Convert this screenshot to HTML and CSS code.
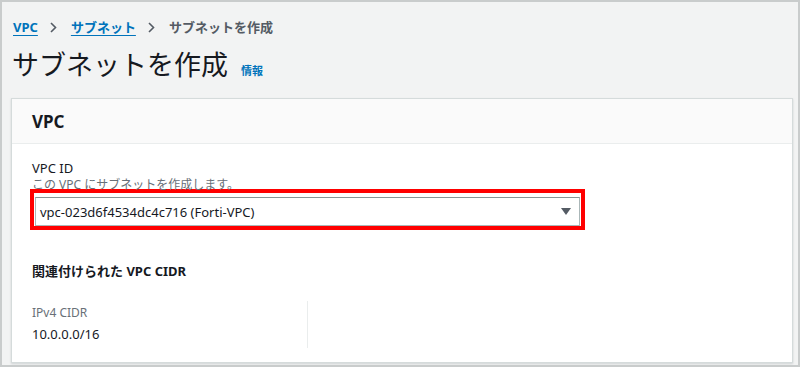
FILE: index.html
```html
<!DOCTYPE html>
<html lang="ja">
<head>
    <meta charset="UTF-8">
    <meta name="viewport" content="width=device-width, initial-scale=1.0">
    <title>サブネットを作成</title>
    <link rel="stylesheet" href="styles.css">
</head>
<body>

    <div class="frame">
        <nav class="breadcrumb">
            <a href="#">VPC</a>
            <svg class="chev" width="7" height="11" viewBox="0 0 7 11"><path d="M1 1l4.5 4.5L1 10" fill="none" stroke="#545b64" stroke-width="1.6"/></svg>
            <a href="#">サブネット</a>
            <svg class="chev" width="7" height="11" viewBox="0 0 7 11"><path d="M1 1l4.5 4.5L1 10" fill="none" stroke="#545b64" stroke-width="1.6"/></svg>
            <span class="current">サブネットを作成</span>
        </nav>

        <h1 class="title">サブネットを作成 <a class="info-link" href="#">情報</a></h1>

        <div class="card">
            <div class="card-header">VPC</div>
            <div class="card-body">
                <div class="field-label">VPC ID</div>
                <div class="field-desc">この VPC にサブネットを作成します。</div>

                <div class="highlight">
                    <div class="select">
                        <span>vpc-023d6f4534dc4c716 (Forti-VPC)</span>
                        <svg width="10" height="7" viewBox="0 0 10 7"><path d="M0 0h10L5 7z" fill="#545b64"/></svg>
                    </div>
                </div>

                <div class="section-title">関連付けられた VPC CIDR</div>

                <div class="cidr-grid">
                    <div class="cidr-col">
                        <div class="cidr-label">IPv4 CIDR</div>
                        <div class="cidr-value">10.0.0.0/16</div>
                    </div>
                    <div class="cidr-col"></div>
                </div>
            </div>
        </div>
    </div>

</body>
</html>
```

FILE: styles.css
```css
body {
    margin: 0;
    background-color: #f2f3f3;
    color: #16191f;
    font-family: "Noto Sans", "Noto Sans CJK JP", sans-serif;
}
.frame {
    height: 367px;
    box-sizing: border-box;
    border: 2px solid #c9cccc;
    background-color: #f2f3f3;
    overflow: hidden;
}
.breadcrumb {
    display: flex;
    align-items: center;
    padding: 16px 0 0 11px;
    font-size: 13px;
    line-height: 18px;
    font-weight: bold;
}
.breadcrumb a {
    color: #0073bb;
    text-decoration: underline;
    text-underline-offset: 3px;
}
.breadcrumb .current {
    color: #545b64;
}
.chev {
    margin: 0 14px 0 12px;
}
.title {
    margin: 11px 0 0 10px;
    font-size: 27px;
    line-height: 36px;
    font-weight: normal;
    color: #16191f;
}
.info-link {
    margin-left: 6px;
    font-size: 11px;
    font-weight: bold;
    color: #0073bb;
    text-decoration: none;
}
.card {
    margin: 9px 0 0 9px;
    width: 782px;
    height: 265px;
    box-sizing: border-box;
    background-color: #fff;
    border: 1px solid #d5dbdb;
    box-shadow: 0 1px 2px rgba(0, 28, 36, 0.15);
}
.card-header {
    height: 45px;
    box-sizing: border-box;
    padding-left: 20px;
    display: flex;
    align-items: center;
    background-color: #fafafa;
    border-bottom: 1px solid #eaeded;
    font-size: 17px;
    font-weight: bold;
}
.card-body {
    padding: 15px 20px 0 20px;
}
.field-label {
    font-size: 13px;
    line-height: 18px;
    color: #16191f;
}
.field-desc {
    font-size: 12px;
    line-height: 16px;
    color: #687078;
}
.highlight {
    width: 555px;
    box-sizing: border-box;
    margin: -4px 0 0 -2px;
    padding: 4px 1px 0 1px;
    border: 4px solid #ff0000;
}
.select {
    height: 29px;
    box-sizing: border-box;
    display: flex;
    align-items: center;
    justify-content: space-between;
    padding: 0 8px 0 4px;
    border: 1px solid #aab7b8;
    border-top-color: #879596;
    font-size: 13px;
    color: #16191f;
}
.section-title {
    margin-top: 32px;
    font-size: 13px;
    line-height: 18px;
    font-weight: bold;
}
.cidr-grid {
    display: grid;
    grid-template-columns: 276px 1fr;
    margin-top: 21px;
}
.cidr-col {
    padding: 4px 0 5px 0;
}
.cidr-col:first-child {
    border-right: 1px solid #eaeded;
}
.cidr-label {
    font-size: 12px;
    line-height: 16px;
    color: #687078;
}
.cidr-value {
    margin-top: 4px;
    font-size: 13px;
    line-height: 18px;
}
```
